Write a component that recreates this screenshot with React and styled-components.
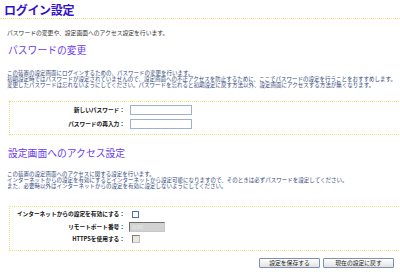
import React from "react";
import styled, { createGlobalStyle } from "styled-components";

const Global = createGlobalStyle`
  html, body { margin: 0; padding: 0; background: #fff; overflow: hidden; }
  body { font-family: "Noto Sans CJK JP", "Noto Sans", sans-serif; width: 400px; height: 275px; }
`;

const Page = styled.div`
  width: 400px;
  height: 275px;
  overflow: hidden;
  display: flex;
  flex-direction: column;
`;

const Title = styled.h1`
  margin: 0;
  padding: 1px 0 0 4px;
  height: 17px;
  font-size: 12px;
  line-height: 17px;
  font-weight: bold;
  color: #3512c8;
  letter-spacing: -0.3px;
`;

const Rule = styled.div`
  height: 0;
  border-top: 1px dotted #ebe37a;
`;

const Lead = styled.p`
  margin: 10px 0 0 7px;
  font-size: 5.8px;
  line-height: 8px;
  color: #333;
  white-space: nowrap;
`;

const Heading = styled.h2`
  margin: ${(p) => p.$top}px 0 0 8px;
  font-size: 9.8px;
  line-height: 13px;
  height: 13px;
  font-weight: normal;
  color: #6a3cf0;
  white-space: nowrap;
`;

const Para = styled.div`
  margin: ${(p) => p.$top}px 0 0 7px;
  display: flex;
  flex-direction: column;
  color: #33487a;
`;

const Line = styled.span`
  display: block;
  height: 6px;
  font-size: 5.5px;
  line-height: 6px;
  white-space: nowrap;
`;

const Box = styled.div`
  margin: ${(p) => p.$top}px 0 0 9px;
  width: 420px;
  border: 1px dotted #ebe37a;
  padding: ${(p) => p.$pad};
  display: grid;
  grid-template-columns: 115px auto;
  column-gap: 4px;
  row-gap: ${(p) => p.$gap}px;
  align-items: center;
`;

const Label = styled.div`
  text-align: right;
  font-size: 5.7px;
  font-weight: bold;
  color: #111;
  white-space: nowrap;
  height: 10px;
  line-height: 10px;
`;

const Control = styled.div`
  height: 10px;
  display: flex;
  align-items: center;
`;

const TextInput = styled.div`
  box-sizing: border-box;
  width: 62px;
  height: 10px;
  border: 1px solid #9fb0cb;
  background: #fff;
  margin-left: 1px;
`;

const PortInput = styled.div`
  box-sizing: border-box;
  width: 36px;
  height: 10px;
  border: 1px solid;
  border-color: #6e6e6e #c8c8c8 #c8c8c8 #6e6e6e;
  background: #d2d2d2;
  color: #e8e8e8;
  font-size: 5px;
  line-height: 8px;
  padding-left: 2px;
  font-family: "Liberation Sans", sans-serif;
`;

const Check = styled.div`
  box-sizing: border-box;
  width: ${(p) => (p.$disabled ? 8 : 7)}px;
  height: ${(p) => (p.$disabled ? 8 : 7)}px;
  margin-left: 3px;
  border: 1px solid;
  border-color: ${(p) =>
    p.$disabled ? "#7a7a7a #c0c0c0 #c0c0c0 #7a7a7a" : "#4f6fa8"};
  background: ${(p) => (p.$disabled ? "#ebe7dc" : "#fff")};
`;

const Buttons = styled.div`
  margin-top: 7px;
  display: flex;
  justify-content: flex-end;
  gap: 3px;
  padding-right: 6px;
`;

const Button = styled.button`
  box-sizing: border-box;
  width: ${(p) => p.$w}px;
  height: 10px;
  padding: 0;
  border: 1px solid #7f8fae;
  border-radius: 1px;
  background: linear-gradient(#ffffff, #e2e2e2);
  font-family: "Noto Sans CJK JP", sans-serif;
  font-size: 5.8px;
  line-height: 8px;
  color: #222;
`;

export default function App() {
  return (
    <Page>
      <Global />
      <Title>ログイン設定</Title>
      <Rule />
      <Lead>パスワードの変更や、設定画面へのアクセス設定を行います。</Lead>

      <Heading $top={7}>パスワードの変更</Heading>
      <Para $top={12.7}>
        <Line>この装置の設定画面にログインするための、パスワードの変更を行います。</Line>
        <Line>
          初期設定時ではパスワードが設定されていませんので、設定画面への不正アクセスを防止するために、ここでパスワードの設定を行うことをおすすめします。
        </Line>
        <Line>
          変更したパスワードは忘れないようにしてください。パスワードを忘れると初期設定に戻す方法以外、設定画面にアクセスする方法が無くなります。
        </Line>
      </Para>

      <Box $top={13.3} $pad="3px 0 5px 0" $gap={4}>
        <Label>新しいパスワード：</Label>
        <Control>
          <TextInput />
        </Control>
        <Label>パスワードの再入力：</Label>
        <Control>
          <TextInput />
        </Control>
      </Box>

      <Heading $top={12}>設定画面へのアクセス設定</Heading>
      <Para $top={11.5}>
        <Line>この装置の設定画面へのアクセスに関する設定を行います。</Line>
        <Line>
          インターネットからの設定を有効にするとインターネットから設定可能になりますので、そのときは必ずパスワードを設定してください。
        </Line>
        <Line>また、必要時以外はインターネットからの設定を有効に設定しないようにしてください。</Line>
      </Para>

      <Box $top={16.5} $pad="2.5px 0 6px 0" $gap={2.5}>
        <Label>インターネットからの設定を有効にする：</Label>
        <Control>
          <Check />
        </Control>
        <Label>リモートポート番号：</Label>
        <Control>
          <PortInput>8080</PortInput>
        </Control>
        <Label>HTTPSを使用する：</Label>
        <Control>
          <Check $disabled />
        </Control>
      </Box>

      <Buttons>
        <Button $w={61}>設定を保存する</Button>
        <Button $w={71}>現在の設定に戻す</Button>
      </Buttons>
    </Page>
  );
}
